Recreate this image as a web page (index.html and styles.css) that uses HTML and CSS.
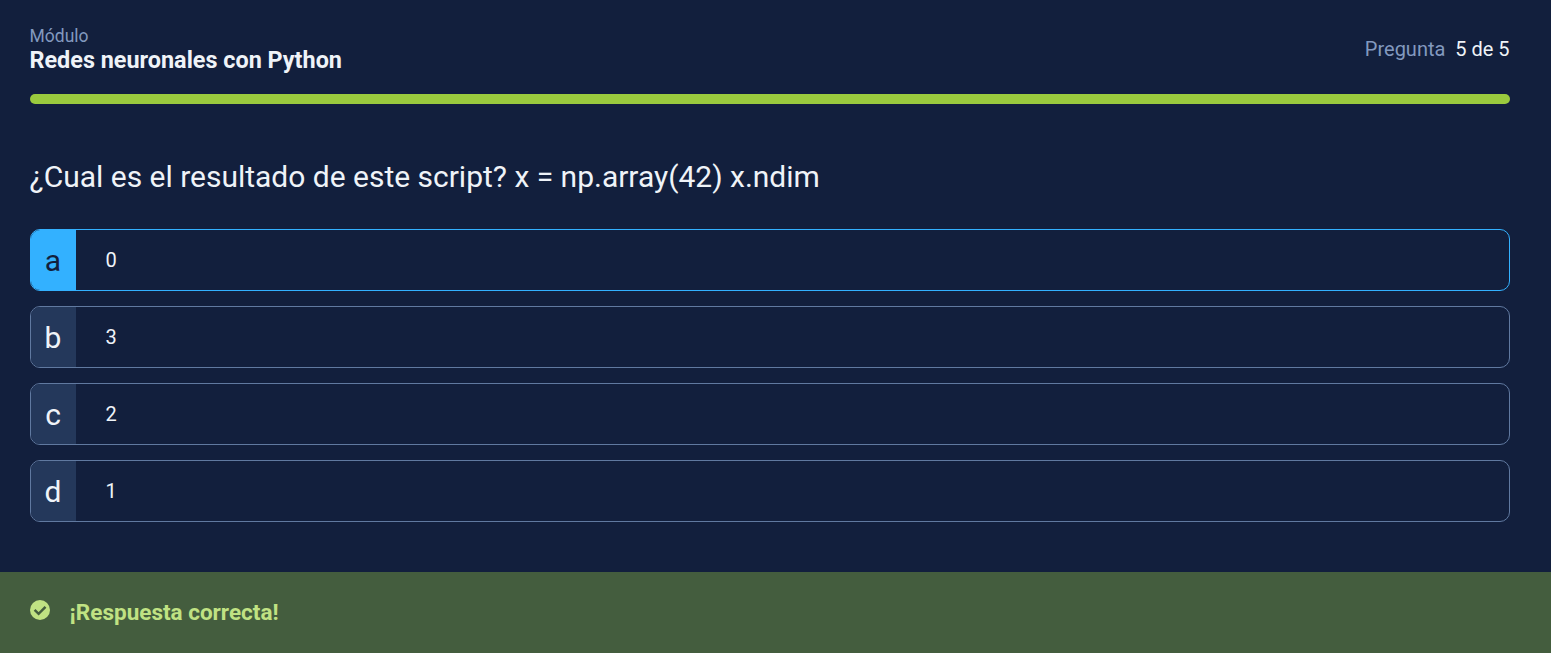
FILE: index.html
```html
<!DOCTYPE html>
<html lang="es">
<head>
<meta charset="utf-8">
<title>Redes neuronales con Python</title>
<link rel="stylesheet" href="styles.css">
</head>
<body>
<main class="quiz">
  <header class="quiz-header">
    <div class="module">
      <p class="module-label">Módulo</p>
      <h1 class="module-title">Redes neuronales con Python</h1>
    </div>
    <p class="counter">Pregunta <span class="counter-value">5 de 5</span></p>
  </header>
  <div class="progress"></div>
  <h2 class="question">¿Cual es el resultado de este script? x = np.array(42) x.ndim</h2>
  <ul class="answers">
    <li class="answer selected"><span class="letter">a</span><span class="text">0</span></li>
    <li class="answer"><span class="letter">b</span><span class="text">3</span></li>
    <li class="answer"><span class="letter">c</span><span class="text">2</span></li>
    <li class="answer"><span class="letter">d</span><span class="text">1</span></li>
  </ul>
</main>
<footer class="feedback">
  <svg class="check" viewBox="0 0 20 20"><circle cx="10" cy="10" r="10"/><path d="M4.6 9.8l4 4 6.9-7"/></svg>
  <p class="feedback-text">¡Respuesta correcta!</p>
</footer>
</body>
</html>
```
FILE: styles.css
```css
* { box-sizing: border-box; margin: 0; padding: 0; }
body {
  height: 653px;
  display: flex;
  flex-direction: column;
  overflow: hidden;
  background: #121f3d;
  color: #eff3f8;
  font-family: Roboto, sans-serif;
}
.quiz { flex: 1; padding: 24px 41px 0 30px; }
.quiz-header { display: flex; justify-content: space-between; height: 70px; }
.module { margin-left: -0.5px; }
.module-label { font-size: 17.5px; line-height: 24px; color: #8299bf; }
.module-title { font-size: 23.4px; line-height: 24px; font-weight: 700; }
.counter { padding: 13px 0.4px 0 0; font-size: 20px; line-height: 24px; color: #8299bf; }
.counter-value { margin-left: 5px; color: #eff3f8; }
.progress { height: 10px; border-radius: 5px; background: #9aca3e; }
.question { margin: 55px 0 0 -0.5px; font-size: 30px; line-height: 36px; font-weight: 400; letter-spacing: -0.01px; }
.answers { display: grid; gap: 15px; margin-top: 34px; list-style: none; }
.answer {
  display: flex;
  height: 62px;
  overflow: hidden;
  border: 1px solid #6079a0;
  border-radius: 10px;
}
.letter {
  display: flex;
  align-items: center;
  justify-content: center;
  width: 45px;
  padding: 1px 1px 0 0;
  background: #24385b;
  font-size: 30px;
}
.text { padding-left: 29.5px; font-size: 20px; line-height: 60px; }
.selected { border-color: #33b1ff; }
.selected .letter { background: #33b1ff; color: #121f3d; }
.feedback { display: flex; height: 81px; padding-left: 30px; background: #445d3e; }
.check { width: 20px; height: 20px; margin-top: 28px; fill: #c0e283; }
.check path { fill: none; stroke: #445d3e; stroke-width: 2.5; }
.feedback-text { margin: 27px 0 0 19.5px; font-size: 22.5px; line-height: 26px; font-weight: 700; color: #c0e283; }
```
